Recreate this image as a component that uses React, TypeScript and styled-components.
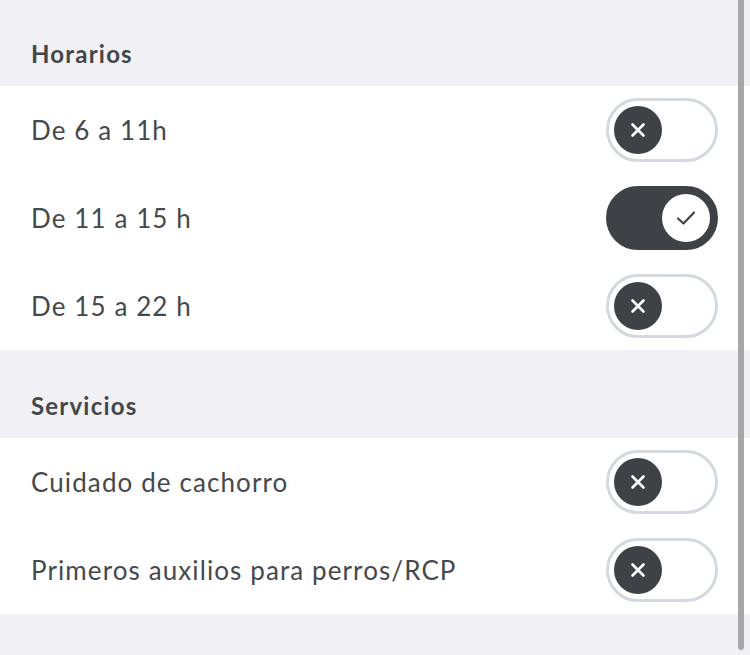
import React, { useState } from "react";
import styled, { createGlobalStyle } from "styled-components";

const GlobalStyle = createGlobalStyle`
    html, body {
        margin: 0;
        padding: 0;
        background: #f0f0f5;
        overflow: hidden;
    }
    body {
        font-family: Lato, "Open Sans", "Liberation Sans", sans-serif;
        color: #42464a;
    }
`;

const Page = styled.div`
    position: relative;
    width: 750px;
    height: 655px;
    overflow: hidden;
    background: #f0f0f5;
`;

const List = styled.div`
    display: flex;
    flex-direction: column;
    margin-top: -2px;
`;

const SectionHeader = styled.div`
    height: 88px;
    box-sizing: border-box;
    display: flex;
    align-items: flex-end;
    padding: 0 31px 18px;
    font-size: 24px;
    font-weight: 700;
    color: #43474b;
    letter-spacing: 1.2px;
`;

const Row = styled.div`
    height: 88px;
    display: flex;
    align-items: center;
    justify-content: space-between;
    padding: 0 32px 0 31px;
    background: #ffffff;
`;

const Label = styled.span`
    font-size: 26px;
    color: #45494d;
    letter-spacing: 1.1px;
`;

const Track = styled.button<{ $on: boolean }>`
    position: relative;
    width: 112px;
    height: 64px;
    box-sizing: border-box;
    border-radius: 32px;
    border: 3px solid ${(p) => (p.$on ? "#3e4145" : "#d3d9e0")};
    background: ${(p) => (p.$on ? "#3e4145" : "#ffffff")};
    padding: 0 5px;
    display: flex;
    align-items: center;
    justify-content: ${(p) => (p.$on ? "flex-end" : "flex-start")};
    cursor: pointer;
`;

const Knob = styled.span<{ $on: boolean }>`
    width: 48px;
    height: 48px;
    border-radius: 50%;
    background: ${(p) => (p.$on ? "#ffffff" : "#3e4145")};
    display: flex;
    align-items: center;
    justify-content: center;
`;

const Scrollbar = styled.div`
    position: absolute;
    top: 0;
    right: 6px;
    width: 6px;
    height: 650px;
    border-radius: 0 0 3px 3px;
    background: #a6a6ab;
`;

function Toggle({ on, onClick }: { on: boolean; onClick: () => void }) {
    return (
        <Track $on={on} onClick={onClick}>
            <Knob $on={on}>
                {on ? (
                    <svg width="20" height="16" viewBox="0 0 20 16">
                        <path
                            d="M2 8.5 L7.5 13.5 L18 2.5"
                            fill="none"
                            stroke="#3e4145"
                            strokeWidth="2.2"
                            strokeLinecap="round"
                            strokeLinejoin="round"
                        />
                    </svg>
                ) : (
                    <svg width="16" height="16" viewBox="0 0 16 16">
                        <path
                            d="M2.5 2.5 L13.5 13.5 M13.5 2.5 L2.5 13.5"
                            fill="none"
                            stroke="#ffffff"
                            strokeWidth="2.6"
                            strokeLinecap="round"
                        />
                    </svg>
                )}
            </Knob>
        </Track>
    );
}

const sections = [
    {
        title: "Horarios",
        items: [
            { label: "De 6 a 11h", on: false },
            { label: "De 11 a 15 h", on: true },
            { label: "De 15 a 22 h", on: false },
        ],
    },
    {
        title: "Servicios",
        items: [
            { label: "Cuidado de cachorro", on: false },
            { label: "Primeros auxilios para perros/RCP", on: false },
        ],
    },
];

export default function App() {
    const [state, setState] = useState<Record<string, boolean>>(() => {
        const s: Record<string, boolean> = {};
        sections.forEach((sec) => sec.items.forEach((i) => (s[i.label] = i.on)));
        return s;
    });

    return (
        <Page>
            <GlobalStyle />
            <List>
                {sections.map((sec) => (
                    <React.Fragment key={sec.title}>
                        <SectionHeader>{sec.title}</SectionHeader>
                        {sec.items.map((item) => (
                            <Row key={item.label}>
                                <Label>{item.label}</Label>
                                <Toggle
                                    on={state[item.label]}
                                    onClick={() =>
                                        setState((s) => ({ ...s, [item.label]: !s[item.label] }))
                                    }
                                />
                            </Row>
                        ))}
                    </React.Fragment>
                ))}
            </List>
            <Scrollbar />
        </Page>
    );
}
